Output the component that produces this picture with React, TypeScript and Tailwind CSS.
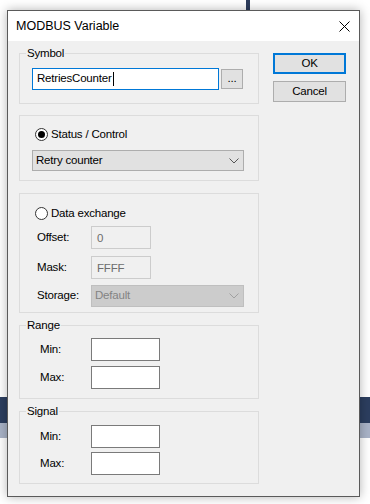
import React from "react";

function Group({
  label,
  className = "",
  children,
}: {
  label?: string;
  className?: string;
  children: React.ReactNode;
}) {
  return (
    <div className={`relative border border-[#dcdcdc] ${className}`}>
      {label && (
        <span className="absolute left-[6px] top-[-8px] bg-[#f0f0f0] px-px leading-[14px]">
          {label}
        </span>
      )}
      {children}
    </div>
  );
}

function Chevron({ color }: { color: string }) {
  return (
    <svg width="10" height="6" viewBox="0 0 10 6" className="shrink-0">
      <path d="M0.5 0.5 L5 5 L9.5 0.5" fill="none" stroke={color} strokeWidth="1" />
    </svg>
  );
}

function Radio({ checked }: { checked: boolean }) {
  return (
    <div className="flex h-[13px] w-[13px] shrink-0 items-center justify-center rounded-full border border-[#333333] bg-white">
      {checked && <div className="h-[7px] w-[7px] rounded-full bg-[#000000]" />}
    </div>
  );
}

function TextBox() {
  return <div className="h-[23px] w-[69px] border border-[#7a7a7a] bg-white" />;
}

function LabeledBox({ label, mt = "" }: { label: string; mt?: string }) {
  return (
    <div className={`flex items-center pl-[20px] ${mt}`}>
      <span className="w-[51px]">{label}</span>
      <TextBox />
    </div>
  );
}

export default function App() {
  return (
    <div className="relative h-[504px] w-[370px] overflow-hidden bg-white font-['Liberation_Sans',Arial,sans-serif] text-[11.5px] tracking-[-0.2px] text-black">
      {/* desktop background */}
      <div className="absolute left-[246px] top-0 h-[11px] w-[4px] bg-[#2d3d5c]" />
      <div className="absolute left-0 top-[397px] h-[26px] w-full bg-[#2c3e5f]" />
      <div className="absolute left-0 top-[423px] h-[15px] w-full bg-[#a9b3c7]" />

      {/* dialog window */}
      <div className="absolute left-[7px] top-[10px] flex h-[487px] w-[353px] flex-col border border-[#5a5a5a] bg-[#f0f0f0] shadow-[0_0_10px_rgba(0,0,0,0.3)]">
        {/* title bar */}
        <div className="flex h-[30px] shrink-0 items-center justify-between bg-white pl-[8px] pr-[9px]">
          <span className="text-[12.5px] tracking-normal">MODBUS Variable</span>
          <svg width="11" height="11" viewBox="0 0 11 11">
            <path d="M0.5 0.5 L10.5 10.5 M10.5 0.5 L0.5 10.5" stroke="#000" strokeWidth="1" fill="none" />
          </svg>
        </div>

        {/* body */}
        <div className="flex flex-1 pl-[11px] pt-[12px]">
          {/* left column */}
          <div className="flex w-[240px] flex-col">
            <Group label="Symbol" className="h-[51px]">
              <div className="flex items-center pl-[12px] pt-[14px]">
                <div className="flex h-[22px] w-[187px] items-center border border-[#0078d7] bg-white pl-[4px]">
                  <span>RetriesCounter</span>
                  <span className="ml-px h-[14px] w-px bg-black" />
                </div>
                <div className="ml-[2px] flex h-[20px] w-[22px] items-center justify-center border border-[#adadad] bg-[#e1e1e1] leading-none">
                  ...
                </div>
              </div>
            </Group>

            <Group className="mt-[11px] h-[66px]">
              <div className="flex items-center gap-[3px] pl-[15px] pt-[12px]">
                <Radio checked />
                <span className="leading-[13px]">Status / Control</span>
              </div>
              <div className="ml-[12px] mt-[9px] flex h-[21px] w-[212px] items-center justify-between border border-[#adadad] bg-[#e1e1e1] pl-[3px] pr-[4px]">
                <span>Retry counter</span>
                <Chevron color="#555555" />
              </div>
            </Group>

            <Group className="mt-[12px] h-[120px]">
              <div className="flex items-center gap-[3px] pl-[15px] pt-[13px]">
                <Radio checked={false} />
                <span className="leading-[13px]">Data exchange</span>
              </div>
              <div className="mt-[6px] flex items-center pl-[17px]">
                <span className="w-[54px]">Offset:</span>
                <div className="h-[23px] w-[60px] border border-[#cccccc] bg-[#f0f0f0] pl-[5px] pt-[3px] text-[#6d6d6d]">
                  0
                </div>
              </div>
              <div className="mt-[7px] flex items-center pl-[17px]">
                <span className="w-[54px]">Mask:</span>
                <div className="h-[23px] w-[60px] border border-[#cccccc] bg-[#f0f0f0] pl-[5px] pt-[3px] text-[#6d6d6d]">
                  FFFF
                </div>
              </div>
              <div className="mt-[6px] flex items-center pl-[17px]">
                <span className="w-[54px]">Storage:</span>
                <div className="flex h-[22px] w-[153px] items-center justify-between border border-[#bfbfbf] bg-[#cccccc] pl-[3px] pr-[4px] text-[#838383]">
                  <span>Default</span>
                  <Chevron color="#a0a0a0" />
                </div>
              </div>
            </Group>

            <Group label="Range" className="mt-[12px] h-[74px]">
              <LabeledBox label="Min:" mt="mt-[12px]" />
              <LabeledBox label="Max:" mt="mt-[5px]" />
            </Group>

            <Group label="Signal" className="mt-[12px] h-[73px]">
              <LabeledBox label="Min:" mt="mt-[13px]" />
              <LabeledBox label="Max:" mt="mt-[4px]" />
            </Group>
          </div>

          {/* right column */}
          <div className="ml-[14px] flex w-[73px] flex-col">
            <div className="flex h-[21px] items-center justify-center border-2 border-[#0078d7] bg-[#e1e1e1]">
              OK
            </div>
            <div className="mt-[7px] flex h-[21px] items-center justify-center border border-[#adadad] bg-[#e1e1e1]">
              Cancel
            </div>
          </div>
        </div>
      </div>
    </div>
  );
}
